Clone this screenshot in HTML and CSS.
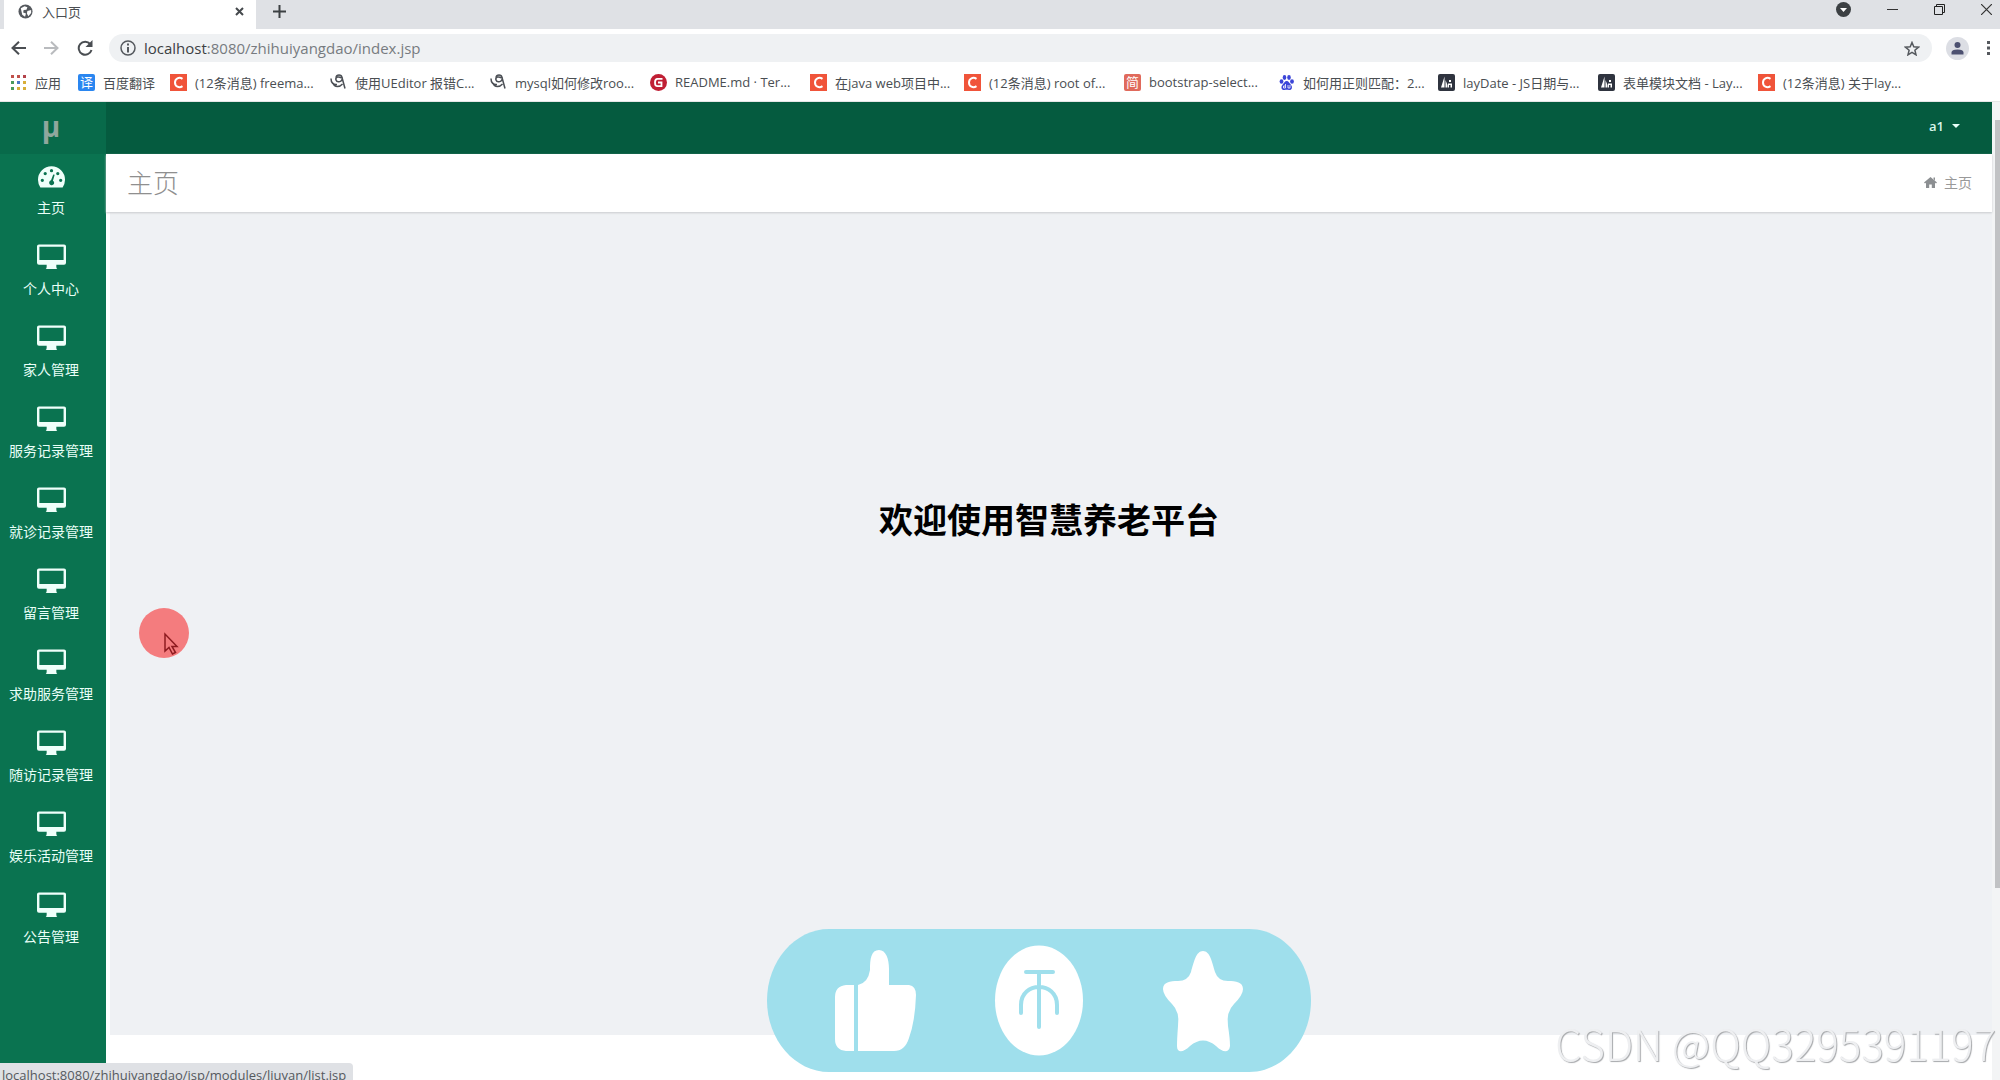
FILE: index.html
```html
<!DOCTYPE html>
<html lang="zh-CN">
<head>
<meta charset="utf-8">
<title>入口页</title>
<link rel="stylesheet" href="styles.css">
</head>
<body>
<svg class="defs" aria-hidden="true">
  <symbol id="monitor" viewBox="0 0 30 26"><path fill-rule="evenodd" d="M2 0h26a2 2 0 0 1 2 2v17a2 2 0 0 1-2 2h-8v2q0 2 1 2.500H9q1-.5 1-2.500v-2H2a2 2 0 0 1-2-2V2a2 2 0 0 1 2-2zM2.500 2.500v13.500h25V2.500z"/></symbol>
  <symbol id="csdn" viewBox="0 0 17 17"><path fill="#f0543a" d="M0 0h17v17H0z"/><path d="M12.500 4.800C9 2.500 5 4.500 5 8.500s4 6 7.500 3.700" fill="none" stroke="#fff" stroke-width="2"/></symbol>
  <symbol id="bird" viewBox="0 0 17 17"><path d="M1 4.500C1 9 3.500 11 7 10.500M6 3.500C6.500 0 11.500 0 12 3.500L15 14.500M12 4c1 4-5 5-6 2s3-4 5-2M3 9c1.500 5 7 4 9.500 1" fill="none" stroke="#4b4f55" stroke-width="1.500"/></symbol>
  <symbol id="layui" viewBox="0 0 17 17"><rect width="17" height="17" rx="2" fill="#2f343f"/><path d="M3 13.500 6.500 2.500v11zM7.500 13.500V6l2 5v2.500zM11 6h2v2h-2zM10 9.500h4v4h-1.500V11H11v2.500h-1z" fill="#fff"/></symbol>
</svg>

<header class="browser">
  <div class="tabs">
    <div class="tab">
      <svg class="globe" viewBox="0 0 16 16"><circle cx="8" cy="8" r="7.500" fill="#55595e"/><path d="M3 4.500 7 2.500l3 1-1 2.500-3 .5-.5 2.500 3 1-1 3.500-3-2zM10 7.500l4-1v3l-3 3.500-1.500-3z" fill="#fff"/></svg>
      <span class="tab-title">入口页</span>
      <button class="icon-btn" aria-label="关闭标签页"><svg width="9" height="9" viewBox="0 0 9 9"><path d="m1 1 7 7M8 1 1 8" stroke="#45494d" stroke-width="2"/></svg></button>
    </div>
    <button class="icon-btn new-tab" aria-label="新标签页"><svg width="13" height="13" viewBox="0 0 13 13"><path d="M6.500 0v13M0 6.500h13" stroke="#3c4043" stroke-width="2"/></svg></button>
    <div class="window-controls">
      <button class="icon-btn" aria-label="搜索标签页"><svg width="15" height="15" viewBox="0 0 15 15"><circle cx="7.500" cy="7.500" r="7.500" fill="#3c4043"/><path d="M4 6h7l-3.500 4z" fill="#fff"/></svg></button>
      <button class="icon-btn" aria-label="最小化"><svg width="11" height="11" viewBox="0 0 11 11"><path d="M0 5.500h11" stroke="#333"/></svg></button>
      <button class="icon-btn" aria-label="还原"><svg width="11" height="11" viewBox="0 0 11 11"><path d="M.5 2.500h8v8h-8zM2.500 2V.5h8v8H9" fill="none" stroke="#222"/></svg></button>
      <button class="icon-btn" aria-label="关闭"><svg width="11" height="11" viewBox="0 0 11 11"><path d="m0 0 11 11M11 0 0 11" stroke="#333" stroke-width="1.200"/></svg></button>
    </div>
  </div>
  <div class="toolbar">
    <button class="icon-btn" aria-label="后退"><svg width="15" height="14" viewBox="0 0 15 14"><path d="M15 7H1.500M8 .8 1.500 7 8 13.200" fill="none" stroke="#4a4e52" stroke-width="2"/></svg></button>
    <button class="icon-btn" aria-label="前进"><svg width="15" height="14" viewBox="0 0 15 14"><path d="M0 7h13.500M7 .8 13.500 7 7 13.200" fill="none" stroke="#b9bbbe" stroke-width="2"/></svg></button>
    <button class="icon-btn" aria-label="刷新"><svg width="16" height="16" viewBox="0 0 16 16"><path d="M13.200 4A6.500 6.500 0 1 0 14.500 10" fill="none" stroke="#4a4e52" stroke-width="2"/><path d="M15.500 0v7h-7z" fill="#4a4e52"/></svg></button>
    <div class="omnibox">
      <svg width="16" height="16" viewBox="0 0 16 16"><circle cx="8" cy="8" r="7" fill="none" stroke="#55595e" stroke-width="1.500"/><path d="M7 3.500h2v2H7zM7 7h2v5.500H7z" fill="#55595e"/></svg>
      <div class="url"><b>localhost</b>:8080/zhihuiyangdao/index.jsp</div>
      <button class="icon-btn" aria-label="收藏"><svg width="16" height="15" viewBox="0 0 16 15"><path d="m8 1.500 1.800 4.300 4.700.4-3.600 3 1.100 4.600-4-2.500-4 2.500 1.100-4.600-3.600-3 4.700-.4z" fill="none" stroke="#55595e" stroke-width="1.500"/></svg></button>
    </div>
    <button class="icon-btn" aria-label="用户"><svg width="23" height="23" viewBox="0 0 23 23"><circle cx="11.500" cy="11.500" r="11.500" fill="#dcdee4"/><circle cx="11.500" cy="8" r="3" fill="#4c5070"/><path d="M5.500 17.500v-2q0-3 6-3t6 3v2z" fill="#4c5070"/></svg></button>
    <button class="icon-btn" aria-label="菜单"><svg width="4" height="14" viewBox="0 0 4 14"><path d="M0 0h3v3H0zM0 5.500h3v3H0zM0 11h3v3H0z" fill="#55595e"/></svg></button>
  </div>
  <nav class="bookmarks">
    <a class="mark mark-apps" href="#"><svg viewBox="0 0 17 17"><path d="M1 1h3v3H1zM7 1h3v3H7z" fill="#c0504a"/><path d="M13 1h3v3h-3z" fill="#b3434a"/><path d="M1 7h3v3H1z" fill="#4a9a5c"/><path d="M7 7h3v3H7z" fill="#4a78c8"/><path d="M13 7h3v3h-3zM7 13h3v3H7zM13 13h3v3h-3z" fill="#d8ae38"/><path d="M1 13h3v3H1z" fill="#4a9a5c"/></svg>应用</a>
    <a class="mark mark-short" href="#"><span class="chip chip-blue">译</span>百度翻译</a>
    <a class="mark" href="#"><svg><use href="#csdn"/></svg>(12条消息) freema...</a>
    <a class="mark" href="#"><svg><use href="#bird"/></svg>使用UEditor 报错C...</a>
    <a class="mark" href="#"><svg><use href="#bird"/></svg>mysql如何修改roo...</a>
    <a class="mark" href="#"><svg viewBox="0 0 17 17"><circle cx="8.500" cy="8.500" r="8.500" fill="#c01f34"/><path d="M12.500 4.800H7.500Q5 4.800 5 8.500t2.500 3.700h4V8.500H8" fill="none" stroke="#fff" stroke-width="1.800"/></svg>README.md · Ter...</a>
    <a class="mark mark-narrow" href="#"><svg><use href="#csdn"/></svg>在java web项目中...</a>
    <a class="mark" href="#"><svg><use href="#csdn"/></svg>(12条消息) root of...</a>
    <a class="mark mark-narrow" href="#"><span class="chip chip-red">简</span>bootstrap-select...</a>
    <a class="mark" href="#"><svg viewBox="0 0 17 17"><g fill="#3c46d8"><ellipse cx="3.500" cy="7.500" rx="1.900" ry="2.300"/><ellipse cx="6.500" cy="3.500" rx="1.800" ry="2.400"/><ellipse cx="11" cy="3.500" rx="1.800" ry="2.400"/><ellipse cx="14" cy="7.500" rx="1.900" ry="2.300"/><path d="M8.700 7c2 0 2.500 2 4 3.500 2.500 2.500 1 6-1.700 5.500-1.500-.3-3-.3-4.500 0-2.800.5-4.200-3-1.800-5.500C6.200 9 6.700 7 8.700 7z"/></g><path d="M7.500 10v4h-2v-2h2M10 11v3h2v-3" fill="none" stroke="#fff" stroke-width=".8"/></svg>如何用正则匹配：2...</a>
    <a class="mark" href="#"><svg><use href="#layui"/></svg>layDate - JS日期与...</a>
    <a class="mark" href="#"><svg><use href="#layui"/></svg>表单模块文档 - Lay...</a>
    <a class="mark" href="#"><svg><use href="#csdn"/></svg>(12条消息) 关于lay...</a>
  </nav>
</header>

<div class="app">
  <aside class="sidebar">
    <a class="logo" href="#">μ</a>
    <nav>
      <a class="item" href="#"><svg viewBox="0 0 30 26"><path fill-rule="evenodd" d="M3.500 25Q1 21 1 17a14 14 0 0 1 28 0q0 4-2.500 8zM13.300 7.500a1.700 1.700 0 1 0 3.400 0 1.700 1.700 0 1 0-3.400 0zM6.800 10.500a1.700 1.700 0 1 0 3.400 0 1.700 1.700 0 1 0-3.400 0zM19.800 10.500a1.700 1.700 0 1 0 3.400 0 1.700 1.700 0 1 0-3.400 0zM3.800 17.500a1.700 1.700 0 1 0 3.400 0 1.700 1.700 0 1 0-3.400 0zM22.800 17.500a1.700 1.700 0 1 0 3.400 0 1.700 1.700 0 1 0-3.400 0zM16.800 11.500l-2.300 6a2.600 2.600 0 1 0 2 .3l1.800-6z"/></svg>主页</a>
      <a class="item" href="#"><svg><use href="#monitor"/></svg>个人中心</a>
      <a class="item" href="#"><svg><use href="#monitor"/></svg>家人管理</a>
      <a class="item" href="#"><svg><use href="#monitor"/></svg>服务记录管理</a>
      <a class="item" href="#"><svg><use href="#monitor"/></svg>就诊记录管理</a>
      <a class="item" href="#"><svg><use href="#monitor"/></svg>留言管理</a>
      <a class="item" href="#"><svg><use href="#monitor"/></svg>求助服务管理</a>
      <a class="item" href="#"><svg><use href="#monitor"/></svg>随访记录管理</a>
      <a class="item" href="#"><svg><use href="#monitor"/></svg>娱乐活动管理</a>
      <a class="item" href="#"><svg><use href="#monitor"/></svg>公告管理</a>
    </nav>
  </aside>
  <div class="main">
    <div class="navbar"><button class="user">a1 <span class="caret"></span></button></div>
    <div class="page-head">
      <h2>主页</h2>
      <a class="crumb" href="#"><svg width="13" height="11" viewBox="0 0 13 11"><path d="M6.500 0 13 5.500l-1 1-1-.8V11H7.800V7.500H5.200V11H2V5.700l-1 .8-1-1zM9.500.5H11v3L9.500 2z" fill="#8c8f92"/></svg>主页</a>
    </div>
    <main class="content"><h1>欢迎使用智慧养老平台</h1></main>
  </div>
  <div class="scrollbar"><div class="thumb"></div></div>
</div>

<div class="status">localhost:8080/zhihuiyangdao/jsp/modules/liuyan/list.jsp</div>

<svg class="pointer" viewBox="0 0 50 50"><circle cx="25" cy="25" r="25" fill="#f47c7e"/><path d="M26 26v17l4-3.500 3.500 6.500 3-1.500L33 38.500h5z" fill="none" stroke="#8e1b20" stroke-width="1.500"/></svg>

<svg class="reactions" viewBox="0 0 544 143" role="img" aria-label="点赞 投币 收藏">
  <path d="M62 0H482C516 0 544 32 544 71.500S516 143 482 143H62C28 143 0 111 0 71.500S28 0 62 0z" fill="#9fdfec"/>
  <g fill="#fff">
    <path d="M87 56V122H79Q68 121 68 110V68Q68 57 79 56zM91 56Q101 54 103 41C103 30 104 21 112 21C119 21 122 30 122 40V56H142Q149 57 149 66Q148 93 142 109Q138 122 127 122H91z"/>
    <ellipse cx="272" cy="71.500" rx="44" ry="55"/>
    <path d="M436 22C443 22 445 33 448 43Q451 52 461 52C469 52 476 53 476 60Q476 66 467 75Q459 83 461 97Q463 110 463 117C462 125 455 123 449 117Q436 106 423 117C417 123 410 125 410 117Q410 110 411 97Q413 83 405 75Q396 66 396 60C396 53 403 52 411 52Q421 52 424 43C427 33 429 22 436 22z"/>
  </g>
  <g fill="none" stroke="#9fdfec" stroke-linecap="round" stroke-width="4"><path d="M259 43h27M272 43v55M254 84V76C254 52 290 52 290 76V84"/></g>
</svg>
<div class="watermark">CSDN @QQ3295391197</div>
</body>
</html>
```
FILE: styles.css
```css
* { box-sizing: border-box; }
body {
  margin: 0;
  height: 100vh;
  display: flex;
  flex-direction: column;
  overflow: hidden;
  background: #fff;
  font-family: "Open Sans", "Noto Sans CJK SC", sans-serif;
  font-size: 14px;
}
a { color: inherit; text-decoration: none; }
button { font: inherit; color: inherit; }
.defs { display: none; }
.icon-btn { display: flex; align-items: center; justify-content: center; padding: 0; border: 0; background: none; flex: none; }

/* Browser chrome */
.browser { flex: none; color: #4a4e52; border-bottom: 1px solid #e6e6e6; }
.tabs { display: flex; height: 29px; background: #dfe1e5; padding-left: 4px; }
.tab { display: flex; align-items: center; width: 252px; padding: 0 12px 6px 14px; background: #fff; }
.globe { width: 15px; height: 15px; }
.tab-title { flex: 1; margin-left: 9px; font-size: 13px; line-height: 20px; }
.new-tab { margin-left: 17px; height: 23px; }
.window-controls { display: flex; gap: 36px; margin-left: auto; padding: 0 8px 10px; }
.toolbar { display: flex; align-items: center; height: 38px; padding: 0 9px 0 11px; gap: 18px; }
.omnibox { flex: 1; display: flex; align-items: center; height: 28px; margin: 0 -4px 0 -2px; padding: 0 12px 0 11px; border-radius: 14px; background: #eff1f3; }
.url { flex: 1; margin-left: 8px; font-size: 15px; color: #777b80; }
.url b { font-weight: 400; color: #3c4043; }
.bookmarks { display: flex; height: 34px; padding: 0 0 4px 10px; font-size: 13px; }
.mark { flex: 0 0 160px; display: flex; align-items: center; gap: 8px; white-space: nowrap; }
.mark svg, .chip { flex: none; width: 17px; height: 17px; }
.mark-apps { flex-basis: 68px; }
.mark-short { flex-basis: 92px; }
.mark-narrow { flex-basis: 154px; }
.chip { border-radius: 2px; color: #fff; text-align: center; line-height: 16px; }
.chip-blue { background: #2a86f0; }
.chip-red { background: #e06a5c; }

/* Application */
.app { flex: 1; display: flex; min-height: 0; }
.sidebar { flex: 0 0 106px; background: #0a7350; color: #e9fff8; }
.logo { display: block; height: 52px; padding-right: 4px; background: #086a4a; color: #8fa79d; text-align: center; font: 700 28px/48px "Open Sans", sans-serif; }
.item { display: flex; flex-direction: column; align-items: center; height: 81px; padding: 9px 4px 0 0; line-height: 20px; gap: 9px; white-space: nowrap; }
.item svg { width: 29px; height: 26px; fill: #effffa; }
.main { flex: 1; display: flex; flex-direction: column; }
.navbar { flex: 0 0 52px; display: flex; justify-content: flex-end; align-items: center; padding: 0 32px 4px; background: #055b3f; }
.user { display: flex; align-items: center; gap: 8px; padding: 0; border: 0; background: none; color: #d8f5ea; font-size: 13px; font-weight: 600; }
.caret { border: 4px solid transparent; border-top-color: #e9fff8; border-bottom: 0; }
.page-head { flex: 0 0 58px; display: flex; align-items: center; justify-content: space-between; padding: 0 20px 2px 21px; box-shadow: 0 1px 2px #c9cbce; z-index: 1; }
.page-head h2 { margin: 0; font-size: 26px; font-weight: 300; color: #8f8f8f; }
.crumb { display: flex; align-items: center; gap: 7px; color: #999; }
.content { flex: 1; margin: 0 0 45px 4px; padding-top: 283px; background: #eff1f4; text-align: center; }
.content h1 { margin: 0; padding-right: 4px; font-size: 34px; line-height: 50px; color: #000; }
.scrollbar { flex: 0 0 8px; padding: 18px 0 0 3px; background: #f3f4f5; }
.thumb { height: 80%; background: #c1c2c4; }

/* Overlays */
.status { position: fixed; left: 0; bottom: -6px; width: 353px; height: 23px; padding: 2px; border-radius: 0 4px 0 0; background: #dfe1e5; color: #55595e; font-size: 13px; line-height: 20px; white-space: nowrap; }
.pointer { position: fixed; left: 139px; top: 608px; width: 50px; height: 50px; }
.reactions { position: fixed; left: 767px; bottom: 8px; width: 544px; height: 143px; }
.watermark { position: fixed; right: 4px; bottom: 11px; font: 300 42px/52px "Noto Sans CJK SC", sans-serif; color: #eeeff1; text-shadow: 1px 1px 1px #a6a8ab; white-space: nowrap; }
```
